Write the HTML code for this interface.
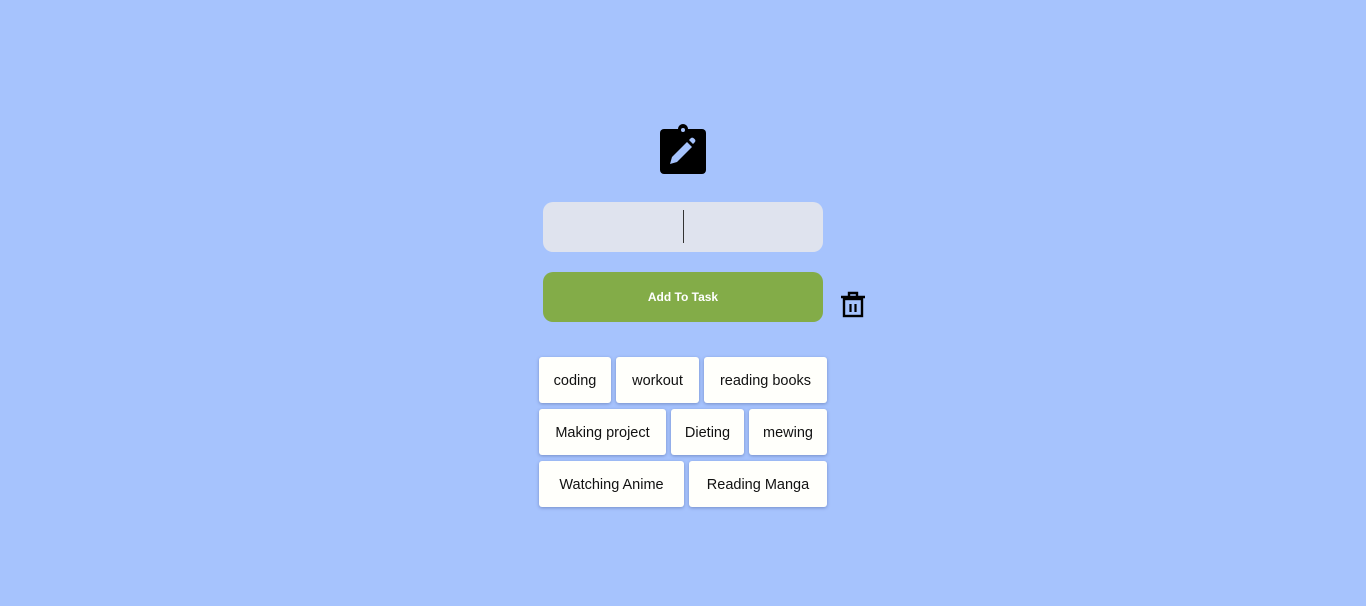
<!DOCTYPE html>
<html><head><style>
body{margin:0;width:1366px;height:606px;background:#a6c3fd;font-family:"Liberation Sans",sans-serif;position:relative;overflow:hidden}
.a{position:absolute}
.inp{left:543px;top:202px;width:280px;height:50px;background:#dfe3ee;border-radius:10px}
.btn{left:543px;top:272px;width:280px;height:50px;background:#83ac48;border-radius:10px;color:#fff;font-size:12px;font-weight:bold;display:flex;align-items:center;justify-content:center}
.t{position:absolute;height:46px;background:#fffffb;border-radius:3px;box-shadow:0 1px 3px rgba(60,80,140,.45);font-size:14.5px;color:#111;display:flex;align-items:center;justify-content:center;box-sizing:border-box;padding-top:2px}
</style></head><body>
<svg class="a" style="left:660px;top:124px" width="47" height="50" viewBox="0 0 47 50">
<rect x="0" y="5" width="46" height="45" rx="4" fill="#000"/>
<circle cx="23" cy="5" r="5" fill="#000"/><circle cx="23" cy="6" r="2" fill="#a6c3fd"/>
<path d="M10 40 L12 33 L27 18 L32 23 L17 38 Z" fill="#a6c3fd"/>
<path d="M29 16 L31 14 Q32.5 13 34 14.5 L35 15.5 Q36 17 34.5 18.5 L33 20 Z" fill="#a6c3fd"/>
</svg>
<div class="a inp"><div class="a" style="left:140px;top:8px;width:1px;height:33px;background:#333"></div></div>
<div class="a btn">Add To Task</div>
<svg class="a" style="left:840px;top:291px" width="26" height="27" viewBox="0 0 26 27">
<path d="M1 6 H25 M9 6 V2 H17 V6" stroke="#000" stroke-width="2.4" fill="none"/>
<rect x="4" y="8" width="18" height="17" stroke="#000" stroke-width="2.4" fill="none"/>
<path d="M10.5 13 V21 M15.5 13 V21" stroke="#000" stroke-width="2.2"/>
</svg>
<div class="t" style="left:539px;top:357px;width:72px">coding</div>
<div class="t" style="left:616px;top:357px;width:83px">workout</div>
<div class="t" style="left:704px;top:357px;width:123px">reading books</div>
<div class="t" style="left:539px;top:409px;width:127px">Making project</div>
<div class="t" style="left:671px;top:409px;width:73px">Dieting</div>
<div class="t" style="left:749px;top:409px;width:78px">mewing</div>
<div class="t" style="left:539px;top:461px;width:145px">Watching Anime</div>
<div class="t" style="left:689px;top:461px;width:138px">Reading Manga</div>
</body></html>
